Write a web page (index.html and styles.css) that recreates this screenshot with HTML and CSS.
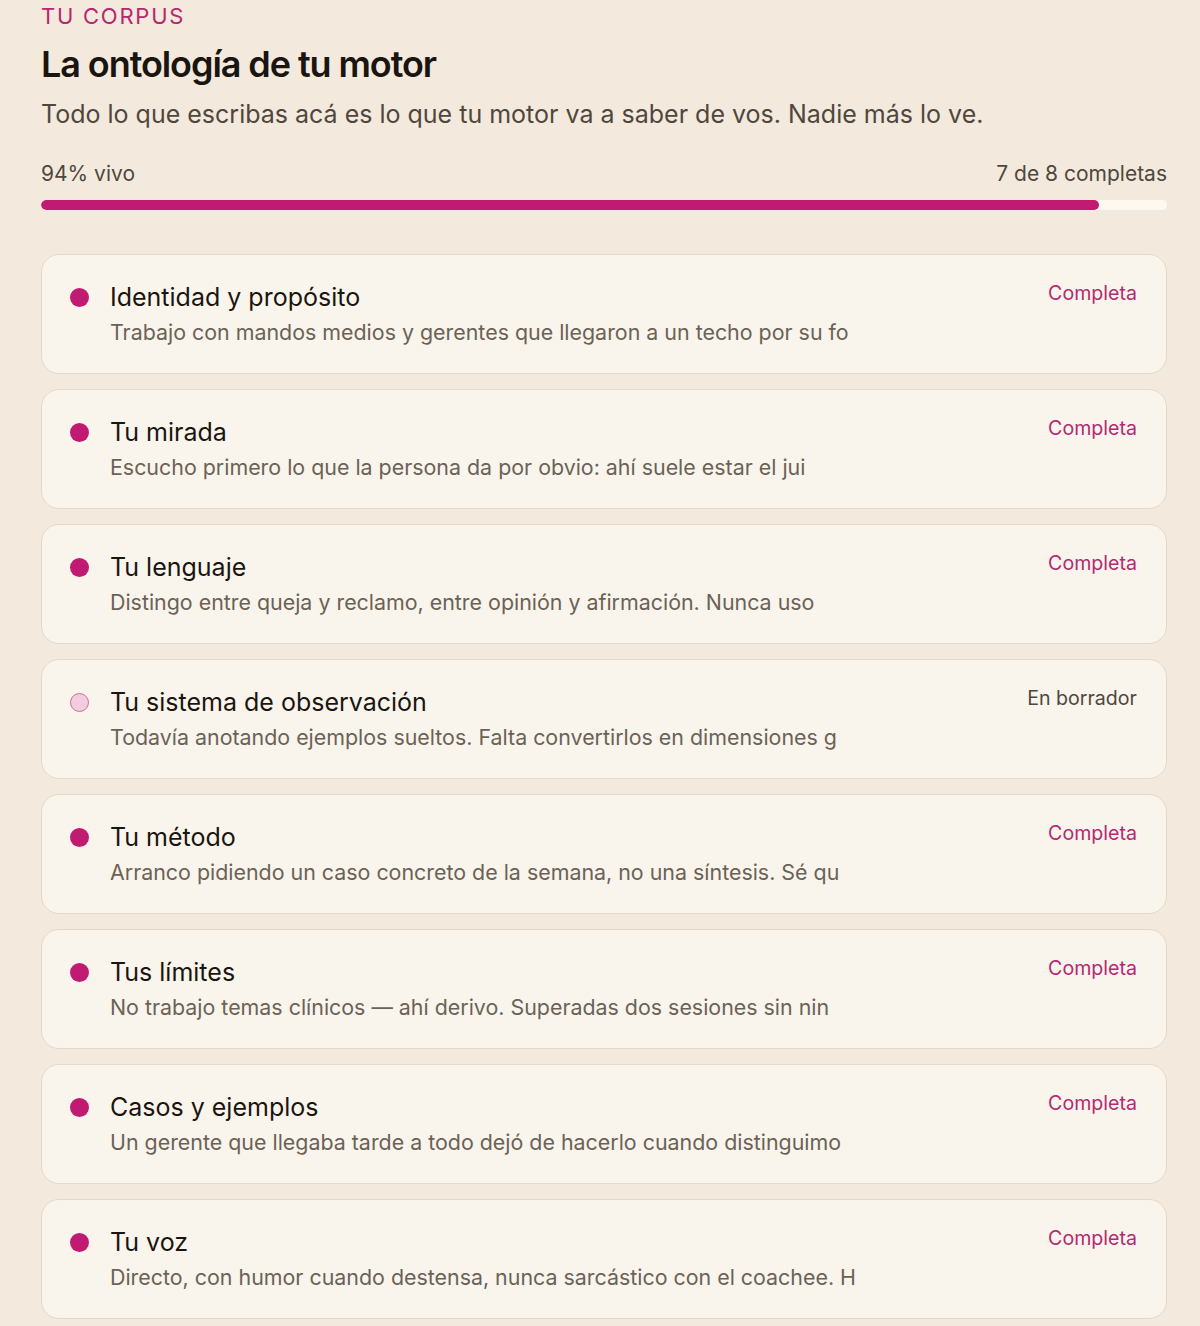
FILE: index.html
```html
<!DOCTYPE html>
<html lang="es">
<head>
    <meta charset="UTF-8">
    <meta name="viewport" content="width=device-width, initial-scale=1.0">
    <title>Tu corpus</title>
    <link rel="stylesheet" href="styles.css">
</head>
<body>
    <div class="page">
        <div class="eyebrow">TU CORPUS</div>
        <h1 class="page-title">La ontología de tu motor</h1>
        <p class="page-lead">Todo lo que escribas acá es lo que tu motor va a saber de vos. Nadie más lo ve.</p>

        <div class="progress-head">
            <span>94% vivo</span>
            <span>7 de 8 completas</span>
        </div>
        <div class="progress-track">
            <div class="progress-fill" style="width: 94%;"></div>
        </div>

        <div class="section-list">
            <div class="section-card">
                <span class="dot"></span>
                <div class="section-body">
                    <div class="section-title">Identidad y propósito</div>
                    <div class="section-text">Trabajo con mandos medios y gerentes que llegaron a un techo por su fo</div>
                </div>
                <span class="section-status">Completa</span>
            </div>

            <div class="section-card">
                <span class="dot"></span>
                <div class="section-body">
                    <div class="section-title">Tu mirada</div>
                    <div class="section-text">Escucho primero lo que la persona da por obvio: ahí suele estar el jui</div>
                </div>
                <span class="section-status">Completa</span>
            </div>

            <div class="section-card">
                <span class="dot"></span>
                <div class="section-body">
                    <div class="section-title">Tu lenguaje</div>
                    <div class="section-text">Distingo entre queja y reclamo, entre opinión y afirmación. Nunca uso</div>
                </div>
                <span class="section-status">Completa</span>
            </div>

            <div class="section-card">
                <span class="dot draft"></span>
                <div class="section-body">
                    <div class="section-title">Tu sistema de observación</div>
                    <div class="section-text">Todavía anotando ejemplos sueltos. Falta convertirlos en dimensiones g</div>
                </div>
                <span class="section-status draft">En borrador</span>
            </div>

            <div class="section-card">
                <span class="dot"></span>
                <div class="section-body">
                    <div class="section-title">Tu método</div>
                    <div class="section-text">Arranco pidiendo un caso concreto de la semana, no una síntesis. Sé qu</div>
                </div>
                <span class="section-status">Completa</span>
            </div>

            <div class="section-card">
                <span class="dot"></span>
                <div class="section-body">
                    <div class="section-title">Tus límites</div>
                    <div class="section-text">No trabajo temas clínicos — ahí derivo. Superadas dos sesiones sin nin</div>
                </div>
                <span class="section-status">Completa</span>
            </div>

            <div class="section-card">
                <span class="dot"></span>
                <div class="section-body">
                    <div class="section-title">Casos y ejemplos</div>
                    <div class="section-text">Un gerente que llegaba tarde a todo dejó de hacerlo cuando distinguimo</div>
                </div>
                <span class="section-status">Completa</span>
            </div>

            <div class="section-card">
                <span class="dot"></span>
                <div class="section-body">
                    <div class="section-title">Tu voz</div>
                    <div class="section-text">Directo, con humor cuando destensa, nunca sarcástico con el coachee. H</div>
                </div>
                <span class="section-status">Completa</span>
            </div>
        </div>
    </div>
</body>
</html>
```

FILE: styles.css
```css
body {
    font-family: Inter, 'Noto Sans', sans-serif;
    background: #f3eadd;
    color: #1a1510;
    margin: 0;
}

.page {
    padding: 2px 33px 40px 41px;
}

.eyebrow {
    font-size: 22px;
    line-height: 28px;
    letter-spacing: 0.08em;
    color: #b8266f;
}

.page-title {
    font-size: 36px;
    line-height: 44px;
    font-weight: 600;
    letter-spacing: -0.03em;
    margin: 12px 0 0 0;
}

.page-lead {
    font-size: 25px;
    line-height: 32px;
    color: #4f473d;
    margin: 12px 0 0 0;
}

.progress-head {
    display: flex;
    justify-content: space-between;
    font-size: 21px;
    line-height: 28px;
    color: #4f473d;
    margin-top: 30px;
}

.progress-track {
    height: 10px;
    background: #fdf9f1;
    border-radius: 5px;
    margin-top: 12px;
    overflow: hidden;
}

.progress-fill {
    height: 100%;
    background: #c01a72;
    border-radius: 5px;
}

.section-list {
    display: flex;
    flex-direction: column;
    gap: 15px;
    margin-top: 44px;
}

.section-card {
    display: flex;
    align-items: flex-start;
    background: #faf5ec;
    border: 1px solid #e3d9ca;
    border-radius: 18px;
    padding: 27px 29px 26px 28px;
}

.dot {
    flex: none;
    width: 19px;
    height: 19px;
    border-radius: 50%;
    background: #c01a72;
    margin-top: 6px;
    margin-right: 21px;
    box-sizing: border-box;
}

.dot.draft {
    background: #f2cddd;
    border: 1.5px solid #c9709b;
}

.section-body {
    flex: 1;
    min-width: 0;
}

.section-title {
    font-size: 25px;
    line-height: 31px;
    color: #1a1510;
}

.section-text {
    font-size: 21.4px;
    line-height: 30px;
    color: #6b6257;
    margin-top: 4px;
    white-space: nowrap;
}

.section-status {
    flex: none;
    font-size: 19.6px;
    line-height: 26px;
    color: #b42a72;
    margin-top: -2px;
}

.section-status.draft {
    color: #4f473d;
}
```
